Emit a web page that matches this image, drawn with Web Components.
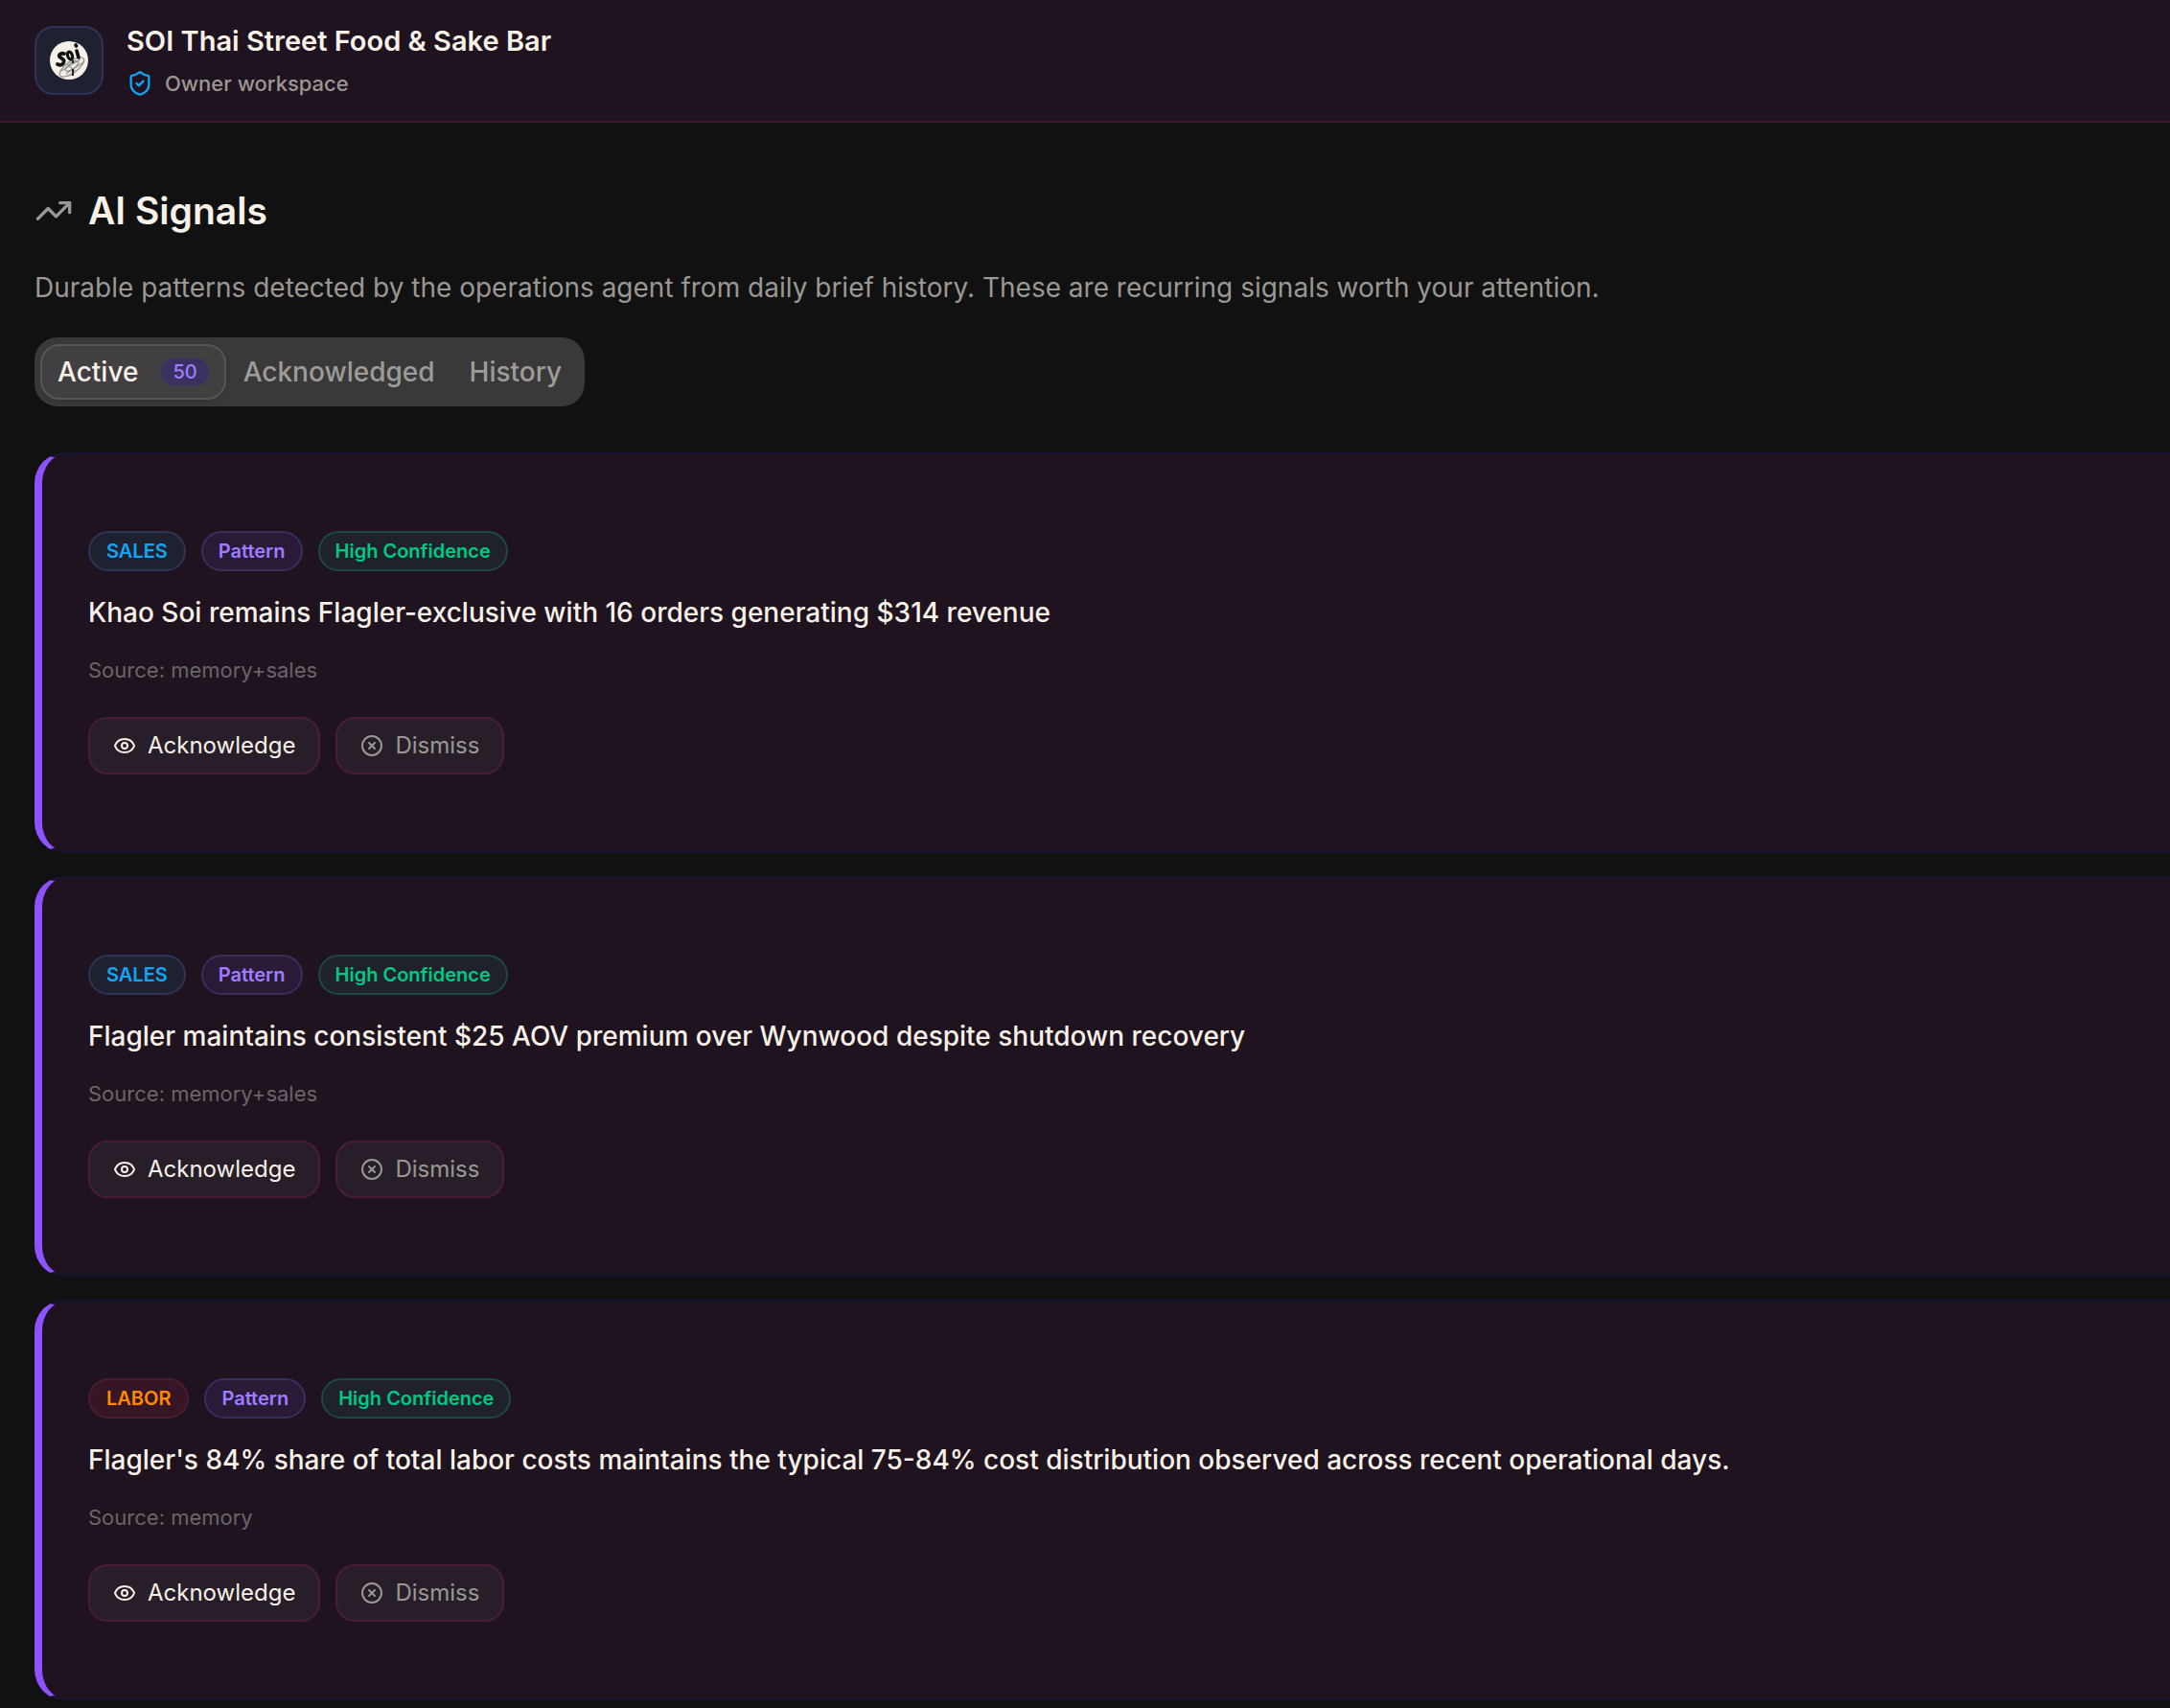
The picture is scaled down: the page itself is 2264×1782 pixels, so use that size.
<!DOCTYPE html>
<html lang="en">
<head>
<meta charset="utf-8">
<title>AI Signals</title>
<style>
  body {
    margin: 0;
    background: #111111;
    color: #f7f1e8;
    font-family: Inter, "Liberation Sans", sans-serif;
  }
</style>
</head>
<body>
<workspace-header name="SOI Thai Street Food &amp; Sake Bar" role-label="Owner workspace"></workspace-header>
<signals-page></signals-page>

<script>
const icons = {
  shield: '<path d="M20 13c0 5-3.5 7.5-7.66 8.95a1 1 0 0 1-.67-.01C7.5 20.5 4 18 4 13V6a1 1 0 0 1 1-1c2 0 4.5-1.2 6.24-2.72a1.17 1.17 0 0 1 1.52 0C14.51 3.81 17 5 19 5a1 1 0 0 1 1 1z"/><path d="m9 12 2 2 4-4"/>',
  trending: '<path d="M16 7h6v6"/><path d="m22 7-8.5 8.5-5-5L2 17"/>',
  eye: '<path d="M2.062 12.348a1 1 0 0 1 0-.696 10.75 10.75 0 0 1 19.876 0 1 1 0 0 1 0 .696 10.75 10.75 0 0 1-19.876 0"/><circle cx="12" cy="12" r="3"/>',
  dismiss: '<circle cx="12" cy="12" r="10"/><path d="m15 9-6 6"/><path d="m9 9 6 6"/>'
}

class UiIcon extends HTMLElement {
  connectedCallback () {
    this.attachShadow({ mode: 'open' })
    this.shadowRoot.innerHTML = `
      <style>
        :host { display: block; flex: none; width: 24px; height: 24px; }
        svg { display: block; width: 100%; height: 100%; }
      </style>
      <svg viewBox="0 0 24 24" fill="none" stroke="currentColor" stroke-width="2" stroke-linecap="round" stroke-linejoin="round" aria-hidden="true">
        ${icons[this.getAttribute('name')]}
      </svg>
    `
  }
}

class WorkspaceHeader extends HTMLElement {
  connectedCallback () {
    this.attachShadow({ mode: 'open' })
    this.shadowRoot.innerHTML = `
      <style>
        :host { display: block; }
        header {
          display: flex;
          align-items: center;
          gap: 24px;
          padding: 21px 36px;
          background: #1e131f;
          border-bottom: 2px solid #3a1828;
        }
        .logo {
          box-sizing: border-box;
          display: grid;
          place-items: center;
          width: 72px;
          height: 72px;
          border: 2px solid #2f3358;
          border-radius: 20px;
          background: #1e2130;
        }
        .logo svg { width: 40px; height: 40px; }
        .text { display: grid; gap: 4px; }
        .name { font-size: 29px; line-height: 44px; font-weight: 600; }
        .role {
          display: flex;
          align-items: center;
          gap: 12px;
          color: #9b9793;
          font-size: 22px;
          line-height: 36px;
          font-weight: 500;
        }
        ui-icon { width: 28px; height: 28px; color: #0ea5f5; }
      </style>
      <header>
        <div class="logo">
          <svg viewBox="0 0 40 40" aria-hidden="true">
            <circle cx="20" cy="20" r="20" fill="#f5f0e8"/>
            <g fill="none" stroke="#999" stroke-width="1.4">
              <ellipse cx="23" cy="27" rx="15" ry="6" transform="rotate(-36 23 27)"/>
              <ellipse cx="23" cy="26" rx="8" ry="3" transform="rotate(-36 23 26)"/>
              <path d="M12 31l20-12M17 34l18-12M18 24l8 7"/>
            </g>
            <path d="M24 20v3M24 29v7" stroke="#222" stroke-width="2"/>
            <g fill="none" stroke="#111" stroke-linecap="round" stroke-linejoin="round">
              <path stroke-width="3.8" d="M15 13c-4-1-7 2-4 4s5 3 3 6-4 2-6 1"/>
              <ellipse cx="21" cy="15" rx="2.4" ry="4" stroke-width="3.2" transform="rotate(-20 21 15)"/>
              <path stroke-width="3.6" d="M28 10l2 7M27 4l.6 1"/>
            </g>
          </svg>
        </div>
        <div class="text">
          <div class="name">${this.getAttribute('name').replace('&', '&amp;')}</div>
          <div class="role"><ui-icon name="shield"></ui-icon><span>${this.getAttribute('role-label')}</span></div>
        </div>
      </header>
    `
  }
}

class SignalTabs extends HTMLElement {
  connectedCallback () {
    this.attachShadow({ mode: 'open' })
    this.shadowRoot.innerHTML = `
      <style>
        :host { display: flex; }
        .tabs {
          box-sizing: border-box;
          display: flex;
          align-items: center;
          height: 72px;
          padding: 6px;
          border-radius: 24px;
          background: #393939;
        }
        button {
          display: flex;
          align-items: center;
          gap: 24px;
          height: 58px;
          box-sizing: border-box;
          padding: 0 16px;
          border: 2px solid transparent;
          border-radius: 20px;
          background: none;
          color: #9f9b98;
          font: inherit;
          font-size: 28px;
          line-height: 40px;
          font-weight: 500;
        }
        .active {
          color: #f7f1e8;
          background: #423f42;
          border-color: #5a5356;
          box-shadow: 0 2px 4px rgba(0, 0, 0, .1);
        }
        .count {
          padding: 0 12px;
          border-radius: 14px;
          background: #3a3160;
          color: #a07cff;
          font-size: 20px;
          line-height: 28px;
        }
      </style>
      <div class="tabs" role="tablist">
        <button class="active" role="tab" aria-selected="true">Active <span class="count">50</span></button>
        <button role="tab" aria-selected="false">Acknowledged</button>
        <button role="tab" aria-selected="false">History</button>
      </div>
    `
  }
}

class SignalBadge extends HTMLElement {
  connectedCallback () {
    this.attachShadow({ mode: 'open' })
    this.shadowRoot.innerHTML = `
      <style>
        :host {
          display: block;
          padding: 0 16px;
          border: 2px solid #2f3358;
          border-radius: 21px;
          font-size: 20px;
          line-height: 38px;
          font-weight: 600;
        }
        :host([tone="sales"]), :host([tone="labor"]) { padding: 0 17px; }
        :host([tone="sales"]) { color: #12a5f4; background: #1e2130; }
        :host([tone="labor"]) { color: #ff8904; background: #361524; border-color: #4a1d36; }
        :host([tone="pattern"]) { color: #a07cff; background: #291a37; border-color: #37305c; }
        :host([tone="high"]) { color: #00c885; background: #1f222b; border-color: #1d4a40; }
      </style>
      <slot></slot>
    `
  }
}

class SignalCard extends HTMLElement {
  connectedCallback () {
    const category = this.getAttribute('category')
    this.attachShadow({ mode: 'open' })
    this.shadowRoot.innerHTML = `
      <style>
        :host { display: block; }
        article {
          padding: 80px 48px;
          border: 2px solid #17142f;
          border-left: 8px solid #8e51ff;
          border-radius: 32px;
          background: #1e131f;
        }
        .badges, .actions { display: flex; gap: 16px; }
        h2 {
          margin: 20px 0;
          font-size: 28px;
          line-height: 46px;
          font-weight: 500;
        }
        p {
          margin: 0 0 32px;
          color: #6b6468;
          font-size: 22px;
          line-height: 34px;
        }
        button {
          display: flex;
          align-items: center;
          gap: 12px;
          box-sizing: border-box;
          height: 60px;
          padding: 0 24px;
          border: 2px solid #4a1d36;
          border-radius: 20px;
          background: #271e29;
          color: inherit;
          font: inherit;
          font-size: 24px;
          line-height: 32px;
        }
        .dismiss { color: #9b9793; }
      </style>
      <article>
        <div class="badges">
          <signal-badge tone="${category.toLowerCase()}">${category}</signal-badge>
          <signal-badge tone="pattern">Pattern</signal-badge>
          <signal-badge tone="high">High Confidence</signal-badge>
        </div>
        <h2><slot></slot></h2>
        <p>Source: ${this.getAttribute('source')}</p>
        <div class="actions">
          <button><ui-icon name="eye"></ui-icon>Acknowledge</button>
          <button class="dismiss"><ui-icon name="dismiss"></ui-icon>Dismiss</button>
        </div>
      </article>
    `
  }
}

class SignalsPage extends HTMLElement {
  connectedCallback () {
    this.loadData()
    this.attachShadow({ mode: 'open' })
    this.render()
  }

  loadData () {
    this.signals = [
      { category: 'SALES', source: 'memory+sales', text: 'Khao Soi remains Flagler-exclusive with 16 orders generating $314 revenue' },
      { category: 'SALES', source: 'memory+sales', text: 'Flagler maintains consistent $25 AOV premium over Wynwood despite shutdown recovery' },
      { category: 'LABOR', source: 'memory', text: 'Flagler\'s 84% share of total labor costs maintains the typical 75-84% cost distribution observed across recent operational days.' }
    ]
  }

  render () {
    const cards = this.signals.map((item) => `
      <signal-card category="${item.category}" source="${item.source}">${item.text}</signal-card>
    `).join('')

    this.shadowRoot.innerHTML = `
      <style>
        :host { display: block; }
        /* the cards run on past the right edge of the window */
        main { padding: 64px 0 8px 36px; overflow: hidden; }
        .title { display: flex; align-items: center; gap: 16px; }
        .title ui-icon { width: 40px; height: 40px; color: #9b9793; }
        h1 {
          margin: 0;
          font-size: 39px;
          line-height: 56px;
          font-weight: 600;
        }
        p {
          margin: 28px 0;
          color: #9b9793;
          font-size: 28px;
          line-height: 48px;
        }
        .list { display: grid; gap: 24px; margin: 48px -36px 0 0; }
      </style>
      <main>
        <div class="title"><ui-icon name="trending"></ui-icon><h1>AI Signals</h1></div>
        <p>Durable patterns detected by the operations agent from daily brief history. These are recurring signals worth your attention.</p>
        <signal-tabs></signal-tabs>
        <div class="list">${cards}</div>
      </main>
    `
  }
}

customElements.define('ui-icon', UiIcon)
customElements.define('workspace-header', WorkspaceHeader)
customElements.define('signal-tabs', SignalTabs)
customElements.define('signal-badge', SignalBadge)
customElements.define('signal-card', SignalCard)
customElements.define('signals-page', SignalsPage)
</script>
</body>
</html>
